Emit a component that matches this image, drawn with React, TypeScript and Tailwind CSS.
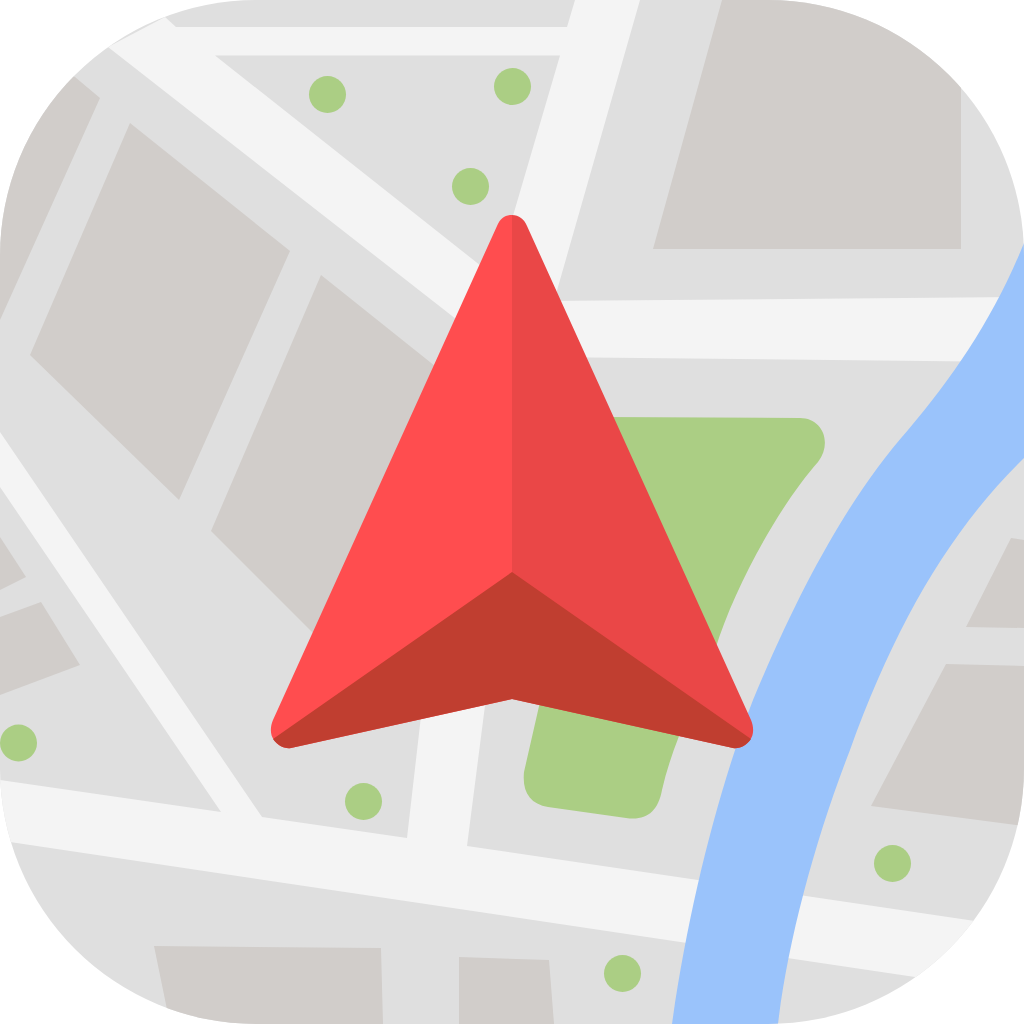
const blocks = [
  '722,0 961,0 961,249 653,249',
  '0,50 75,77 100,98 0,320',
  '130,123 290,251 179,500 30,355',
  '321,275 470,394 330,650 211,531',
  '0,537 26,577 0,590',
  '41,602 80,665 0,695 0,617',
  '154,946 381,948 383,1024 170,1024',
  '459,957 549,960 554,1024 459,1024',
  '1011,538 1024,540 1024,628 966,627',
  '946,664 1024,666 1024,826 871,806',
];

const roads = [
  // top band and the road running down from it
  '165,17 176,27 567,27 575,0 640,0 550,315 500,260 560,55.5 215,55.5 500,281 470,330 108,47',
  // horizontal road right of the arrow
  '540,301 1024,297 1024,362 540,357',
  // long diagonal on the left
  '0,432 262,817 262,840 221,840 221,812 0,487',
  // bottom road
  '0,780 221,812 262,817 407,838 424,690 487,690 467,846 975,921 1024,929 1024,985 915,977 10,842 0,841',
];

const trees = [
  [327.5, 94.5],
  [512.5, 86.5],
  [470.5, 186.5],
  [18.5, 743],
  [363.5, 801.5],
  [892.5, 863.5],
  [622.5, 973.5],
];

export default function App() {
  return (
    <div className="w-[1024px] h-[1024px] bg-white">
      <svg viewBox="0 0 1024 1024" className="block w-[1024px] h-[1024px]">
        <defs>
          <clipPath id="tile">
            <rect width="1024" height="1024" rx="256" ry="256" />
          </clipPath>
        </defs>
        <g clipPath="url(#tile)">
          <rect width="1024" height="1024" fill="#dfdfdf" />
          {blocks.map((points) => (
            <polygon key={points} points={points} fill="#d1cdca" />
          ))}
          {roads.map((points) => (
            <polygon key={points} points={points} fill="#f4f4f4" />
          ))}
          {/* Park */}
          <path
            d="M600 417 L800 418 C822 418 833 442 818 462 C780 505 735 585 715 650 C695 700 672 745 662 790 C658 812 646 821 626 818 L548 807 C530 804 522 792 524 772 L545 680 Z"
            fill="#abce84"
          />
          {trees.map(([cx, cy]) => (
            <circle key={cx} cx={cx} cy={cy} r="18.5" fill="#abce84" />
          ))}
          {/* River */}
          <path
            d="M1024 243 C995 315 955 375 908 430 C855 490 805 575 753 700 C718 790 688 910 672 1024 L778 1024 C788 940 815 840 850 750 C895 625 950 530 1024 458 Z"
            fill="#9ac3fb"
          />
          {/* Arrow */}
          <path
            d="M512 215 C505 215 500 219 497 226 L273 720 C270 727 270 735 274 740 C278 746 285 749 291 748 L512 699 Z"
            fill="#ff4d4f"
          />
          <path
            d="M512 215 C519 215 524 219 527 226 L751 720 C754 727 754 735 750 740 C746 746 739 749 733 748 L512 699 Z"
            fill="#ea4747"
          />
          <path
            d="M512 572 L273 739 C278 746 285 749 291 748 L512 699 L733 748 C739 749 746 746 751 739 Z"
            fill="#c03e30"
          />
        </g>
      </svg>
    </div>
  );
}
